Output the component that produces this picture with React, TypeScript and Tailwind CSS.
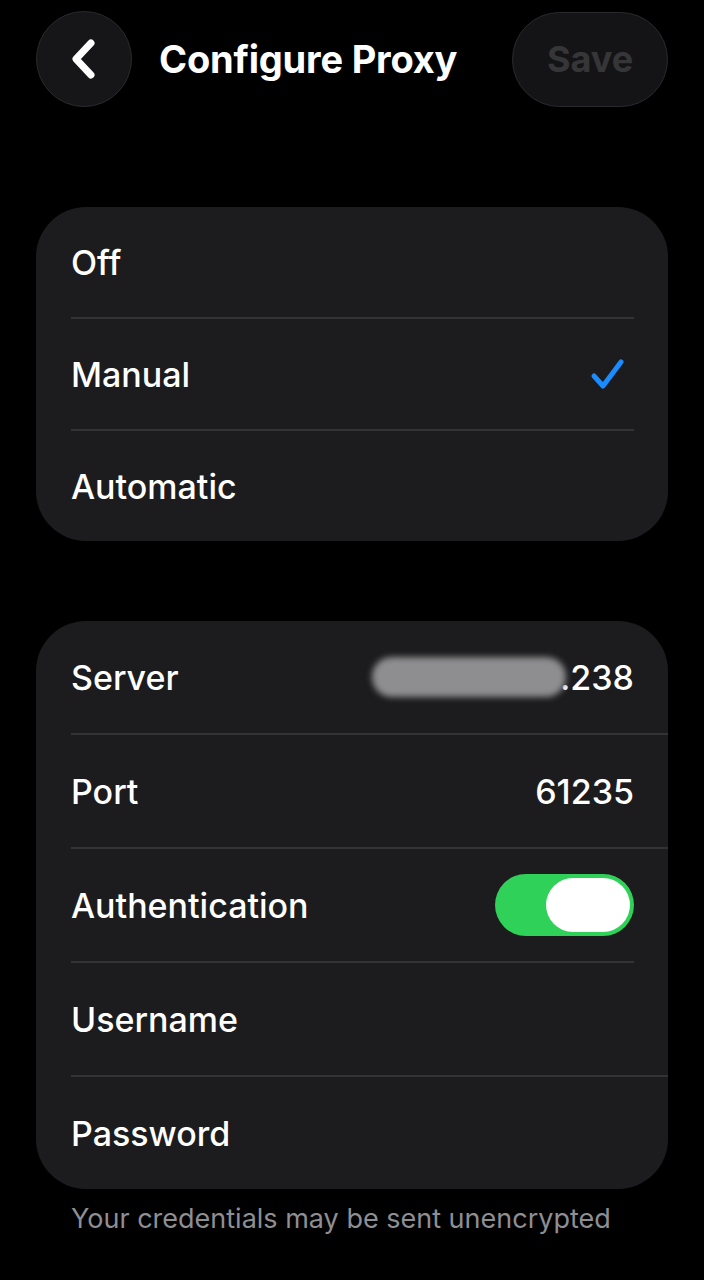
import * as React from "react";

const font = { fontFamily: "Inter, 'Noto Sans', sans-serif" };

function Divider({ full }: { full?: boolean }) {
  return <div className={`h-[2px] bg-[#333336] ml-[35px] ${full ? "mr-0" : "mr-[34px]"}`} />;
}

function Row({ children, h }: { children: React.ReactNode; h?: string }) {
  return <div className={`flex items-center justify-between pl-[35px] pr-[34px] ${h ?? "h-[112px]"}`}>{children}</div>;
}

export default function App() {
  const [mode, setMode] = React.useState("Manual");
  const [auth, setAuth] = React.useState(true);

  return (
    <div className="min-h-[1280px] w-[704px] bg-black text-white" style={font}>
      {/* Header */}
      <div className="flex items-center px-[36px] pt-[11px]">
        <button className="w-[96px] h-[96px] rounded-full bg-[#161618] border border-[#2a2a2c] flex items-center justify-center">
          <svg width="34" height="42" viewBox="0 0 34 42" fill="none">
            <path d="M24 5 L9 21 L24 37" stroke="white" strokeWidth="7" strokeLinecap="round" strokeLinejoin="round" />
          </svg>
        </button>
        <h1 className="ml-[27px] text-[38px] font-bold tracking-[-0.2px] flex-1">Configure Proxy</h1>
        <button className="w-[156px] h-[95px] rounded-full bg-[#141416] border border-[#2a2a2c] text-[36px] font-bold text-[#363638]">
          Save
        </button>
      </div>

      {/* Mode card */}
      <div className="mx-[36px] mt-[100px] rounded-[50px] bg-[#1c1c1e] text-[34px] font-medium">
        {["Off", "Manual", "Automatic"].map((m, i) => (
          <div key={m}>
            {i > 0 && <Divider />}
            <div onClick={() => setMode(m)}>
              <Row h="h-[110px]">
                <span>{m}</span>
                {mode === m && (
                  <svg width="36" height="34" viewBox="0 0 36 34" fill="none" className="mr-[8px]">
                    <path d="M4 19 L13 29 L31 5" stroke="#1a8cff" strokeWidth="5" strokeLinecap="round" strokeLinejoin="round" />
                  </svg>
                )}
              </Row>
            </div>
          </div>
        ))}
      </div>

      {/* Details card */}
      <div className="mx-[36px] mt-[80px] rounded-[50px] bg-[#1c1c1e] text-[34px] font-medium overflow-hidden">
        <Row>
          <span>Server</span>
          <div className="flex items-center">
            <div className="w-[194px] h-[40px] rounded-full bg-[#8e8e90] blur-[3px] -mr-[6px]" />
            <span>.238</span>
          </div>
        </Row>
        <Divider full />
        <Row>
          <span>Port</span>
          <span>61235</span>
        </Row>
        <Divider full />
        <Row>
          <span>Authentication</span>
          <button
            onClick={() => setAuth(!auth)}
            className={`w-[139px] h-[62px] rounded-full flex items-center p-[4px] ${auth ? "bg-[#30d158] justify-end" : "bg-[#39393d] justify-start"}`}
          >
            <div className="w-[84px] h-[54px] rounded-full bg-white" />
          </button>
        </Row>
        <Divider />
        <Row>
          <span>Username</span>
          <span />
        </Row>
        <Divider full />
        <Row>
          <span>Password</span>
          <span />
        </Row>
      </div>

      <p className="px-[71px] pt-[10px] text-[27px] text-[#8e8e93]">Your credentials may be sent unencrypted</p>
    </div>
  );
}
